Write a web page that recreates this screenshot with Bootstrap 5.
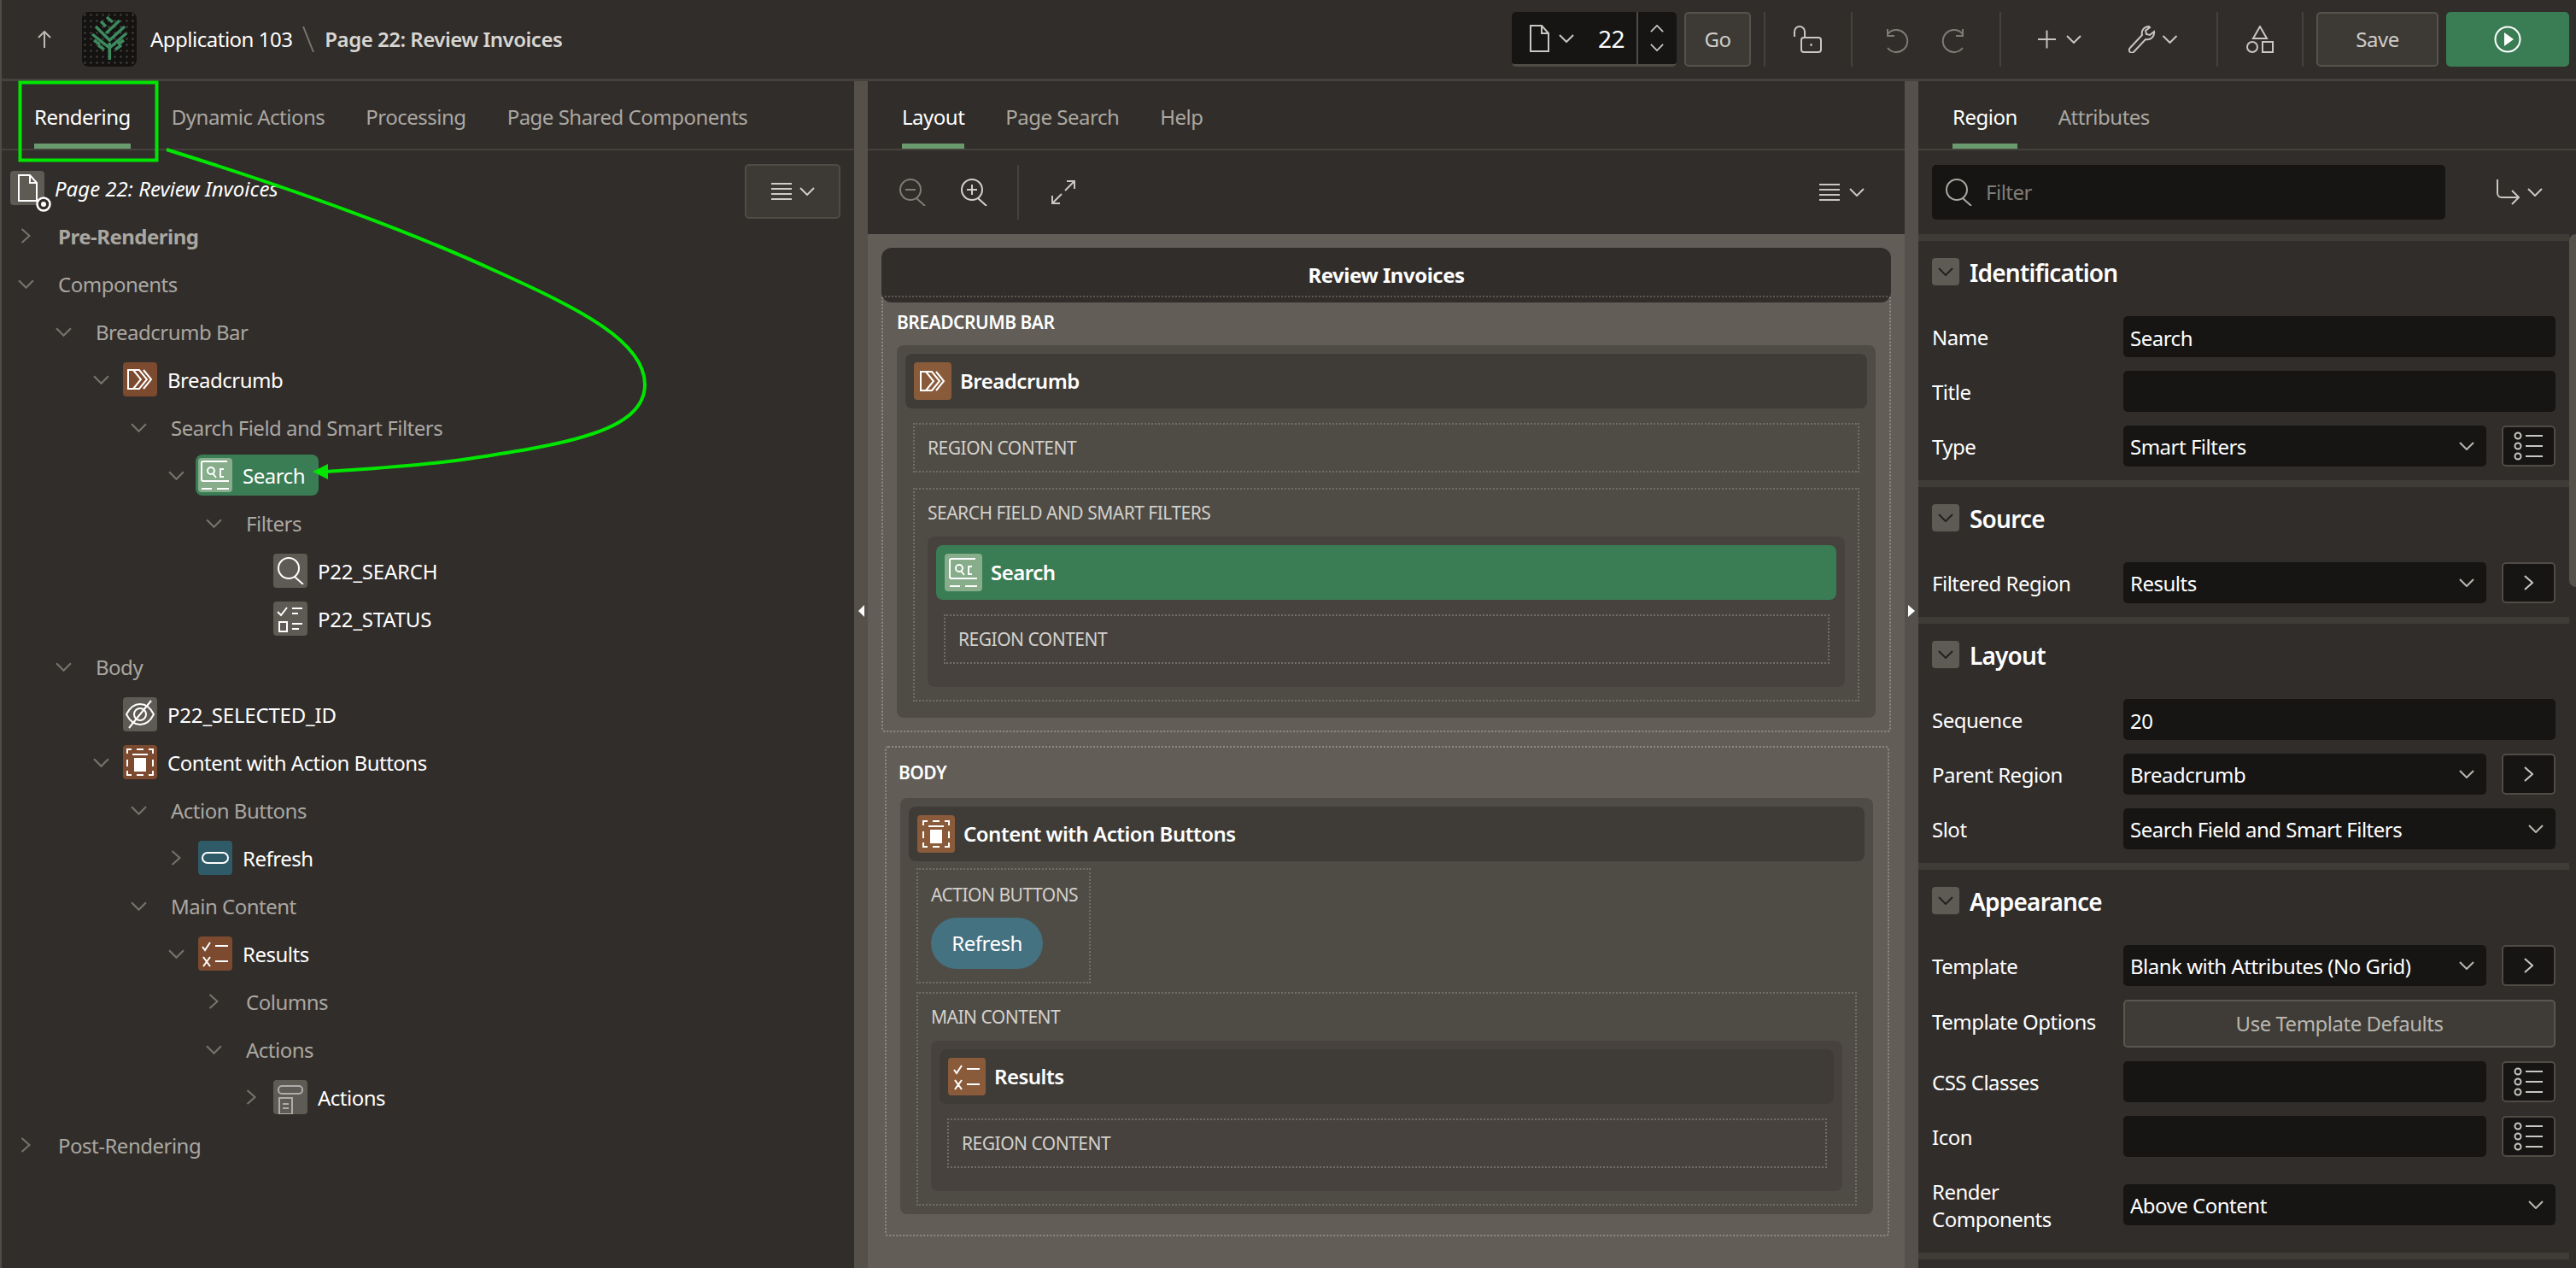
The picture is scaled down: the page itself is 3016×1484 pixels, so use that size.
<!DOCTYPE html>
<html lang="en">
<head>
  <meta charset="UTF-8">
  <title>Page 22: Review Invoices</title>
  <link href="https://cdn.jsdelivr.net/npm/bootstrap@5.3.0/dist/css/bootstrap.min.css" rel="stylesheet">
  <style>
    html, body { height: 100%; }
    body { margin: 0; background: #312d2a; color: #fff; font-family: "Noto Sans", "Liberation Sans", sans-serif; font-size: 24px; line-height: 32px; overflow: hidden; position: relative; letter-spacing: -.5px; }
    svg { display: block; flex: none; }
    .ln { fill: none; stroke: currentColor; stroke-width: 2; stroke-linecap: butt; stroke-linejoin: miter; }
    .shell { height: 1484px; width: 3016px; border-left: 2px solid #4f4b45; }

    /* top bar */
    .topbar { height: 95px; border-bottom: 3px solid #45413c; padding-right: 8px; }
    .upbtn { margin-left: 40px; color: #bdbab5; }
    .logo { width: 64px; height: 64px; margin-left: 34px; border-radius: 8px; background-color: #141312; background-image: radial-gradient(#3b3a37 1px, transparent 1.5px); background-size: 7px 7px; }
    .appname { margin-left: 16px; }
    .crumbsep { margin: 0 12px; color: #77736d; }
    .pagename { font-weight: 600; color: #d8d6d2; }
    .pagepick { width: 193px; height: 64px; background: #161513; border-bottom: 3px solid #4f4b45; border-radius: 5px; }
    .pagepick .pp-doc { margin-left: 20px; color: #c9c7c3; }
    .pagepick .pp-chev { margin-left: 11px; color: #c9c7c3; }
    .pagepick .pp-num { margin-left: 28px; width: 45px; font-size: 28px; }
    .pp-steps { border-left: 2px solid #4f4b45; height: 100%; width: 48px; color: #c9c7c3; }
    .tbtn { height: 64px; background: #3d3935; border: 2px solid #55514b; border-radius: 5px; color: #cfcdc9; }
    .tbtn-go { width: 78px; margin-left: 9px; }
    .tbtn-save { width: 143px; margin-left: 15px; }
    .tbtn-run { width: 144px; height: 64px; margin-left: 9px; background: #3a7d55; border-radius: 5px; color: #fff; }
    .tdiv { width: 2px; height: 64px; background: #45413c; }
    .d1 { margin-left: 15px; }
    .ic-lock { margin: 0 34px 0 33px; color: #c9c7c3; }
    .ic-undo { margin: 0 38px 0 34px; color: #7f7c77; }
    .ic-redo { margin-right: 36px; color: #7f7c77; }
    .ic-plus { margin-left: 43px; color: #c9c7c3; }
    .ic-wrench { margin-left: 55px; color: #c9c7c3; }
    .ic-shapes { margin: 0 33px 0 33px; color: #c9c7c3; }
    .ic-gap1 { margin-left: 12px; color: #c9c7c3; }
    .ic-gap2 { margin: 0 45px 0 7px; color: #c9c7c3; }

    /* panes */
    .pane-left { width: 998px; }
    .gutter { width: 16px; background: #55514a; position: relative; }
    .gutter-mark { position: absolute; top: 613px; left: 5px; width: 0; height: 0; border-top: 7px solid transparent; border-bottom: 7px solid transparent; }
    .gutter-mark.to-left { border-right: 7px solid #fff; }
    .gutter-mark.to-right { border-left: 8px solid #fff; left: 4px; }
    .pane-mid { width: 1214px; }
    .pane-right { width: 770px; }
    .tabsrow { height: 81px; border-bottom: 2px solid #45413c; padding-left: 38px; gap: 48px; }
    .pane-mid .tabsrow, .pane-right .tabsrow { padding-left: 40px; }
    .tablink { padding-top: 26px; color: #aaa7a1; line-height: 32px; border-bottom: 6px solid transparent; height: 79px; }
    .tablink.on { color: #fff; border-bottom-color: #6a9a6e; }

    /* left tree */
    .treewrap { padding-top: 16px; position: relative; }
    .treemenu { position: absolute; top: 16px; right: 16px; width: 112px; height: 64px; background: #3d3935; border: 2px solid #4f4b45; border-radius: 5px; color: #cfcdc9; gap: 9px; }
    .trow { height: 56px; display: flex; align-items: center; color: #aaa7a1; }
    .l0 { padding-left: 19px; } .l1 { padding-left: 63px; } .l2 { padding-left: 107px; } .l3 { padding-left: 151px; }
    .l4 { padding-left: 195px; } .l5 { padding-left: 239px; } .l6 { padding-left: 283px; }
    .tw { width: 35px; flex: none; color: #77736d; }
    .tw-r { padding-left: 3px; }
    .tlabel { margin-left: 12px; padding-top: 2px; }
    .tname { margin-left: 12px; color: #fff; padding-top: 2px; }
    .tname-item { letter-spacing: -.2px; }
    .tstrong { font-weight: 700; color: #aaa7a1; }
    .tic { width: 40px; height: 40px; border-radius: 4px; color: #fff; flex: none; }
    .bg-grey { background: #5e5a54; }
    .bg-brown { background: #7c4a2e; }
    .bg-teal { background: #2f5b68; }
    .bg-pale { background: #87ad8b; }
    .selnode { background: #3a7d55; border-radius: 8px; height: 48px; padding: 4px 16px 4px 3px; display: flex; align-items: center; margin-left: -3px; }
    .pagerow { padding-left: 10px; height: 56px; display: flex; align-items: center; position: relative; }
    .pagerow .tname { font-style: italic; margin-left: 12px; letter-spacing: 0; }
    .pagebadge { position: absolute; left: 40px; top: 38px; }

    /* centre canvas */
    .midbar { height: 98px; padding: 0 47px 0 36px; color: #c9c7c3; }
    .ic-zo { color: #7f7c77; margin-right: 40px; }
    .ic-zi { color: #d2d0cc; }
    .mdiv { width: 2px; height: 64px; background: #45413c; margin: 0 38px 0 35px; }
    .menu-mid { gap: 11px; }
    .canvas { background: #625d57; padding: 16px 16px 0; height: 1210px; overflow: hidden; }
    .pagetitle { height: 64px; background: #312d2a; border-radius: 12px; font-weight: 700; }
    .dot { border: 2px dotted #8e8a84; border-radius: 4px; }
    .dot2 { border: 2px dotted #716d67; }
    .capt { font-size: 21px; line-height: 30px; text-transform: uppercase; color: #d3d1cc; white-space: nowrap; }
    .capt-main { color: #fff; font-weight: 600; }
    .zone-a { margin-top: -8px; height: 511px; padding: 14px 16px 0 16px; border-top-color: #5c5852; position: relative; }
    .zone-b { margin: 16px 2px 0 4px; height: 574px; padding: 14px 17px 0 16px; }
    .zone-b .capt-main { margin-left: -2px; }
    .block { background: #4f4b45; border-radius: 8px; padding: 10px; margin-top: 12px; }
    .zone-b .block { margin-top: 15px; }
    .rhead { height: 64px; border-radius: 8px; background: #3f3c37; padding-left: 10px; font-weight: 600; padding-top: 0; }
    .rhead.sel { background: #3a7d55; }
    .rhead .tic { width: 44px; height: 44px; margin-right: 10px; }
    .rhead .bg-brown { background: #8a5b3a; }
    .box { height: 58px; padding: 10px 15px; margin: 17px 9px 0; }
    .box-inner { margin: 17px 8px 0 9px; }
    .subzone { height: 250px; margin: 18px 9px 9px; padding: 12px 15px 0; }
    .darkblock { background: #47423d; border-radius: 8px; padding: 10px; margin: 13px 0 0 0; height: 176px; }
    .btnzone { width: 204px; height: 135px; margin: 8px 0 0 9px; padding: 14px 15px 0; }
    .pillbtn { width: 131px; height: 60px; margin-top: 12px; border-radius: 30px; background: #447281; color: #fff; }
    .mainzone { height: 250px; margin: 10px 9px 0; padding: 12px 15px 0; }

    /* property editor */
    .rightbar { height: 98px; padding: 0 31px 0 16px; }
    .filterbox { width: 601px; height: 64px; background: #161513; border-radius: 5px; padding-left: 15px; color: #aaa7a1; }
    .filterbox input { background: transparent; border: 0; color: #fff; margin-left: 16px; padding: 0; font-size: 24px; box-shadow: none; letter-spacing: -.5px; }
    .filterbox input::placeholder { color: #807c76; opacity: 1; }
    .ret-ic { margin-left: 59px; color: #c9c7c3; }
    .ret-chev { margin-left: 9px; color: #c9c7c3; }
    .propscroll { height: 1210px; overflow: hidden; }
    .propcol { width: 762px; }
    .scrolltrack { width: 8px; }
    .scrollthumb { height: 413px; background: #55514b; border-radius: 8px 0 0 8px; }
    .sect { border-top: 8px solid #3f3c37; padding: 20px 16px 16px; }
    .shead { margin-bottom: 36px; height: 32px; }
    .sicon { width: 32px; height: 32px; background: #5e5a54; border-radius: 4px; color: #23211f; margin-right: 12px; }
    .stitle { font-size: 28px; font-weight: 600; letter-spacing: -.8px; padding-top: 2px; }
    .prow { min-height: 48px; margin-top: 16px; }
    .plabel { width: 224px; flex: none; line-height: 32px; padding-top: 2px; }
    .plabel-up { margin-top: -6px; }
    .inp { height: 48px; background: #161513; border: 0; border-radius: 5px; color: #fff; font-size: 24px; padding: 2px 8px 0; letter-spacing: -.5px; box-shadow: none; }
    .inp:focus { background: #161513; color: #fff; }
    select.inp { padding-right: 40px; background-position: right 14px center; background-size: 18px 10px; background-repeat: no-repeat; appearance: none; background-image: url("data:image/svg+xml,%3Csvg xmlns='http://www.w3.org/2000/svg' viewBox='0 0 18 10'%3E%3Cpolyline points='1,1 9,9 17,1' fill='none' stroke='%23b9b6b0' stroke-width='2'/%3E%3C/svg%3E"); }
    .withbtn { width: 425px; flex: none; }
    .fullw { width: 506px; flex: none; }
    .iconbtn { width: 63px; height: 48px; margin-left: 18px; background: #161513; border: 2px solid #4f4b45; border-radius: 5px; color: #c9c7c3; }
    .defbtn { width: 506px; height: 56px; background: #3f3c37; border: 2px solid #5a564f; border-radius: 5px; color: #b9b6b0; }
    .rowtall { min-height: 80px; }
    .overlay { position: absolute; left: 0; top: 0; pointer-events: none; }
  </style>
</head>
<body>
  <svg width="0" height="0" class="position-absolute">
    <symbol id="cd" viewBox="0 0 18 10"><polyline class="ln" points="1,1 9,9 17,1"/></symbol>
    <symbol id="cr" viewBox="0 0 11 18"><polyline class="ln" points="1,1 10,9 1,17"/></symbol>
    <symbol id="cu" viewBox="0 0 18 10"><polyline class="ln" points="1,9 9,1 17,9"/></symbol>
    <symbol id="doc" viewBox="0 0 24 32"><path class="ln" d="M2 1h13l8 9v21H2zM15 1v9h8"/></symbol>
    <symbol id="menu" viewBox="0 0 24 20"><path class="ln" d="M0 1h24M0 7h24M0 13h24M0 19h24"/></symbol>
    <symbol id="mag" viewBox="0 0 32 32"><circle class="ln" cx="14" cy="13" r="12"/><path class="ln" d="M21 23l10 9"/></symbol>
    <symbol id="magm" viewBox="0 0 32 32"><circle class="ln" cx="14" cy="13" r="12"/><path class="ln" d="M21 23l10 9M8 13h12"/></symbol>
    <symbol id="magp" viewBox="0 0 32 32"><circle class="ln" cx="14" cy="13" r="12"/><path class="ln" d="M21 23l10 9M8 13h12M14 7v12"/></symbol>
    <symbol id="exp" viewBox="0 0 28 28"><path class="ln" d="M16 12L27 1M18 1h9v9M12 16L1 27M1 18v9h9"/></symbol>
    <symbol id="lst" viewBox="0 0 36 36"><circle class="ln" cx="5" cy="6" r="3.500"/><circle class="ln" cx="5" cy="18" r="3.500"/><circle class="ln" cx="5" cy="30" r="3.500"/><path class="ln" d="M14 6h20M14 18h20M14 30h20"/></symbol>
    <symbol id="crumb" viewBox="0 0 40 40"><path class="ln" d="M6 9h13l9 11-9 11H6zM12 9l9 11-9 11M24 9l9 11-9 11"/></symbol>
    <symbol id="srch" viewBox="0 0 40 40"><path class="ln" d="M6 4h28M6 4a2 2 0 0 0-2 2v19a2 2 0 0 0 2 2h30M4 36h12M22 36h14M30 13h-4v9h4"/><circle class="ln" cx="15" cy="15" r="4"/><path class="ln" d="M17 18l4 5"/></symbol>
    <symbol id="chk" viewBox="0 0 40 40"><path class="ln" d="M5 12l4 4 7-9M22 8h12M22 14h7M7 24h9v11H7zM22 26h12M22 32h8"/></symbol>
    <symbol id="eye" viewBox="0 0 40 40"><path class="ln" d="M4 20c4-8 10-12 16-12s12 4 16 12c-4 8-10 12-16 12S8 28 4 20z"/><circle class="ln" cx="20" cy="20" r="7"/><path class="ln" d="M33 4L7 36"/></symbol>
    <symbol id="cont" viewBox="0 0 40 40"><path class="ln" d="M5 10V5h5M16 5h8M30 5h5v5M5 17v8M35 17v8M5 30v5h5M16 35h8M30 35h5v-5"/><path class="ln" d="M11 11h18"/><rect x="13" y="15" width="14" height="16" fill="currentColor"/></symbol>
    <symbol id="pill" viewBox="0 0 40 40"><rect class="ln" x="5" y="14" width="30" height="12" rx="6"/></symbol>
    <symbol id="res" viewBox="0 0 40 40"><path class="ln" d="M5 12l3 4 6-9M20 11h15M20 29h15M6 24l8 11M14 24L6 35"/></symbol>
    <symbol id="act" viewBox="0 0 40 40"><rect class="ln" x="6" y="7" width="28" height="9" rx="4"/><path class="ln" d="M7 21h15v19H7zM11 28h7M11 33h7"/></symbol>
    <symbol id="undo" viewBox="0 0 32 32"><path class="ln" d="M7 4v8h8M7 10a13 13 0 1 1 0 16"/></symbol>
    <symbol id="redo" viewBox="0 0 32 32"><path class="ln" d="M25 4v8h-8M25 10a13 13 0 1 0 0 16"/></symbol>
    <symbol id="lock" viewBox="0 0 33 32"><path class="ln" d="M1 13V7a6 6 0 0 1 12 0v7"/><rect class="ln" x="9" y="14" width="23" height="17" rx="3"/><path class="ln" d="M20.500 21v3"/></symbol>
    <symbol id="plus" viewBox="0 0 22 22"><path class="ln" d="M11 0v22M0 11h22"/></symbol>
    <symbol id="wrench" viewBox="0 0 32 32"><path class="ln" d="M24 1a8 8 0 0 0-8 10L2 26a3 3 0 0 0 4 5l14-15a8 8 0 0 0 10-9l-5 4-4-1-1-4 5-4a8 8 0 0 0-1-1z"/></symbol>
    <symbol id="shapes" viewBox="0 0 32 32"><path class="ln" d="M16 1l8 14H8zM19 19h12v12H19z"/><circle class="ln" cx="7" cy="25" r="6"/></symbol>
    <symbol id="ret" viewBox="0 0 28 30"><path class="ln" d="M2 0v16a5 5 0 0 0 5 5h19M19 13l8 8-8 8"/></symbol>
    <symbol id="run" viewBox="0 0 32 32"><circle class="ln" cx="16" cy="16" r="14.500"/><path d="M12 8l11 8-11 8z" fill="currentColor"/></symbol>
  </svg>

  <div class="shell d-flex flex-column">
    <header class="topbar d-flex align-items-center">
      <svg class="upbtn" width="20" height="20" viewBox="0 0 20 20"><path class="ln" d="M10 20V1M3 8l7-7 7 7"/></svg>
      <div class="logo d-flex align-items-center justify-content-center">
        <svg width="64" height="64" viewBox="0 0 64 64"><path d="M32.300 56V36M12 26l20.300 16L52 25M16 17l16.300 16L50 17M22 11l6 6M28 25L44 10M29 6l7 6M14 33l7 5M19 39l7 5M49 33l-7 5M46 39l-7 5" fill="none" stroke="#3d8a5f" stroke-width="3.500"/></svg>
      </div>
      <span class="appname">Application 103</span>
      <svg class="crumbsep" width="14" height="30" viewBox="0 0 14 30"><path d="M1 0l12 30" stroke="currentColor" stroke-width="2"/></svg>
      <span class="pagename">Page 22: Review Invoices</span>

      <div class="pagepick d-flex align-items-center ms-auto">
        <svg class="pp-doc" width="24" height="32"><use href="#doc"/></svg>
        <svg class="pp-chev" width="18" height="10"><use href="#cd"/></svg>
        <span class="pp-num">22</span>
        <div class="pp-steps d-flex flex-column align-items-center justify-content-around ms-auto py-2">
          <svg width="16" height="9"><use href="#cu"/></svg>
          <svg width="16" height="9"><use href="#cd"/></svg>
        </div>
      </div>
      <div class="tbtn tbtn-go d-flex align-items-center justify-content-center">Go</div>
      <div class="tdiv d1"></div>
      <svg class="ic-lock" width="33" height="32"><use href="#lock"/></svg>
      <div class="tdiv"></div>
      <svg class="ic-undo" width="32" height="32"><use href="#undo"/></svg>
      <svg class="ic-redo" width="32" height="32"><use href="#redo"/></svg>
      <div class="tdiv"></div>
      <svg class="ic-plus" width="21" height="22"><use href="#plus"/></svg>
      <svg class="ic-gap1" width="18" height="10"><use href="#cd"/></svg>
      <svg class="ic-wrench" width="32" height="32"><use href="#wrench"/></svg>
      <svg class="ic-gap2" width="19" height="10"><use href="#cd"/></svg>
      <div class="tdiv"></div>
      <svg class="ic-shapes" width="32" height="32"><use href="#shapes"/></svg>
      <div class="tdiv"></div>
      <div class="tbtn tbtn-save d-flex align-items-center justify-content-center">Save</div>
      <div class="tbtn-run d-flex align-items-center justify-content-center"><svg width="32" height="32"><use href="#run"/></svg></div>
    </header>

    <div class="d-flex flex-grow-1">
      <!-- left: rendering tree -->
      <section class="pane-left">
        <nav class="tabsrow d-flex">
          <span class="tablink on">Rendering</span>
          <span class="tablink">Dynamic Actions</span>
          <span class="tablink">Processing</span>
          <span class="tablink">Page Shared Components</span>
        </nav>
        <div class="treewrap">
          <div class="treemenu d-flex align-items-center justify-content-center">
            <svg width="24" height="20"><use href="#menu"/></svg>
            <svg width="18" height="10"><use href="#cd"/></svg>
          </div>
          <div class="pagerow">
            <div class="tic bg-grey d-flex align-items-center justify-content-center"><svg width="24" height="32"><use href="#doc"/></svg></div>
            <svg class="pagebadge" width="18" height="18" viewBox="0 0 18 18"><circle cx="9" cy="9" r="7.500" fill="#312d2a" stroke="#fff" stroke-width="2.500"/><circle cx="9" cy="9" r="3" fill="#fff"/></svg>
            <span class="tname">Page 22: Review Invoices</span>
          </div>
          <div class="trow l0"><span class="tw tw-r"><svg width="12" height="18"><use href="#cr"/></svg></span><span class="tlabel tstrong">Pre-Rendering</span></div>
          <div class="trow l0"><span class="tw"><svg width="19" height="11"><use href="#cd"/></svg></span><span class="tlabel">Components</span></div>
          <div class="trow l1"><span class="tw"><svg width="19" height="11"><use href="#cd"/></svg></span><span class="tlabel">Breadcrumb Bar</span></div>
          <div class="trow l2"><span class="tw"><svg width="19" height="11"><use href="#cd"/></svg></span><div class="tic bg-brown"><svg width="40" height="40"><use href="#crumb"/></svg></div><span class="tname">Breadcrumb</span></div>
          <div class="trow l3"><span class="tw"><svg width="19" height="11"><use href="#cd"/></svg></span><span class="tlabel">Search Field and Smart Filters</span></div>
          <div class="trow l4"><span class="tw"><svg width="19" height="11"><use href="#cd"/></svg></span>
            <div class="selnode"><div class="tic bg-pale"><svg width="40" height="40"><use href="#srch"/></svg></div><span class="tname">Search</span></div>
          </div>
          <div class="trow l5"><span class="tw"><svg width="19" height="11"><use href="#cd"/></svg></span><span class="tlabel">Filters</span></div>
          <div class="trow l6"><span class="tw"></span><div class="tic bg-grey d-flex align-items-center justify-content-center"><svg width="32" height="32"><use href="#mag"/></svg></div><span class="tname tname-item">P22_SEARCH</span></div>
          <div class="trow l6"><span class="tw"></span><div class="tic bg-grey"><svg width="40" height="40"><use href="#chk"/></svg></div><span class="tname tname-item">P22_STATUS</span></div>
          <div class="trow l1"><span class="tw"><svg width="19" height="11"><use href="#cd"/></svg></span><span class="tlabel">Body</span></div>
          <div class="trow l2"><span class="tw"></span><div class="tic bg-grey"><svg width="40" height="40"><use href="#eye"/></svg></div><span class="tname tname-item">P22_SELECTED_ID</span></div>
          <div class="trow l2"><span class="tw"><svg width="19" height="11"><use href="#cd"/></svg></span><div class="tic bg-brown"><svg width="40" height="40"><use href="#cont"/></svg></div><span class="tname">Content with Action Buttons</span></div>
          <div class="trow l3"><span class="tw"><svg width="19" height="11"><use href="#cd"/></svg></span><span class="tlabel">Action Buttons</span></div>
          <div class="trow l4"><span class="tw tw-r"><svg width="12" height="18"><use href="#cr"/></svg></span><div class="tic bg-teal"><svg width="40" height="40"><use href="#pill"/></svg></div><span class="tname">Refresh</span></div>
          <div class="trow l3"><span class="tw"><svg width="19" height="11"><use href="#cd"/></svg></span><span class="tlabel">Main Content</span></div>
          <div class="trow l4"><span class="tw"><svg width="19" height="11"><use href="#cd"/></svg></span><div class="tic bg-brown"><svg width="40" height="40"><use href="#res"/></svg></div><span class="tname">Results</span></div>
          <div class="trow l5"><span class="tw tw-r"><svg width="12" height="18"><use href="#cr"/></svg></span><span class="tlabel">Columns</span></div>
          <div class="trow l5"><span class="tw"><svg width="19" height="11"><use href="#cd"/></svg></span><span class="tlabel">Actions</span></div>
          <div class="trow l6"><span class="tw tw-r"><svg width="12" height="18"><use href="#cr"/></svg></span><div class="tic bg-grey text-white-50"><svg width="40" height="40"><use href="#act"/></svg></div><span class="tname">Actions</span></div>
          <div class="trow l0"><span class="tw tw-r"><svg width="12" height="18"><use href="#cr"/></svg></span><span class="tlabel">Post-Rendering</span></div>
        </div>
      </section>

      <div class="gutter"><span class="gutter-mark to-left"></span></div>

      <!-- centre: layout -->
      <section class="pane-mid">
        <nav class="tabsrow d-flex">
          <span class="tablink on">Layout</span>
          <span class="tablink">Page Search</span>
          <span class="tablink">Help</span>
        </nav>
        <div class="midbar d-flex align-items-center">
          <svg class="ic-zo" width="32" height="32"><use href="#magm"/></svg>
          <svg class="ic-zi" width="32" height="32"><use href="#magp"/></svg>
          <div class="mdiv"></div>
          <svg width="28" height="28"><use href="#exp"/></svg>
          <div class="menu-mid d-flex align-items-center ms-auto">
            <svg width="24" height="20"><use href="#menu"/></svg>
            <svg width="18" height="10"><use href="#cd"/></svg>
          </div>
        </div>
        <div class="canvas">
          <div class="pagetitle d-flex align-items-center justify-content-center">Review Invoices</div>

          <div class="zone-a dot">
            <div class="capt capt-main">Breadcrumb Bar</div>
            <div class="block">
              <div class="rhead d-flex align-items-center"><div class="tic bg-brown d-flex align-items-center justify-content-center"><svg width="40" height="40"><use href="#crumb"/></svg></div>Breadcrumb</div>
              <div class="box dot2 capt d-flex align-items-center">Region Content</div>
              <div class="subzone dot2">
                <div class="capt">Search Field and Smart Filters</div>
                <div class="darkblock">
                  <div class="rhead sel d-flex align-items-center"><div class="tic bg-pale d-flex align-items-center justify-content-center"><svg width="40" height="40"><use href="#srch"/></svg></div>Search</div>
                  <div class="box box-inner dot2 capt d-flex align-items-center">Region Content</div>
                </div>
              </div>
            </div>
          </div>

          <div class="zone-b dot">
            <div class="capt capt-main">Body</div>
            <div class="block">
              <div class="rhead d-flex align-items-center"><div class="tic bg-brown d-flex align-items-center justify-content-center"><svg width="40" height="40"><use href="#cont"/></svg></div>Content with Action Buttons</div>
              <div class="btnzone dot2">
                <div class="capt">Action Buttons</div>
                <div class="pillbtn d-flex align-items-center justify-content-center">Refresh</div>
              </div>
              <div class="mainzone dot2">
                <div class="capt">Main Content</div>
                <div class="darkblock">
                  <div class="rhead d-flex align-items-center"><div class="tic bg-brown d-flex align-items-center justify-content-center"><svg width="40" height="40"><use href="#res"/></svg></div>Results</div>
                  <div class="box box-inner dot2 capt d-flex align-items-center">Region Content</div>
                </div>
              </div>
            </div>
          </div>
        </div>
      </section>

      <div class="gutter"><span class="gutter-mark to-right"></span></div>

      <!-- right: property editor -->
      <section class="pane-right">
        <nav class="tabsrow d-flex">
          <span class="tablink on">Region</span>
          <span class="tablink">Attributes</span>
        </nav>
        <div class="rightbar d-flex align-items-center">
          <div class="filterbox d-flex align-items-center">
            <svg width="32" height="32"><use href="#mag"/></svg>
            <input class="form-control" type="text" placeholder="Filter">
          </div>
          <svg class="ret-ic" width="28" height="30"><use href="#ret"/></svg>
          <svg class="ret-chev" width="18" height="10"><use href="#cd"/></svg>
        </div>
        <div class="propscroll d-flex">
          <div class="propcol">
            <div class="sect">
              <div class="shead d-flex align-items-center"><div class="sicon d-flex align-items-center justify-content-center"><svg width="18" height="10"><use href="#cd"/></svg></div><span class="stitle">Identification</span></div>
              <div class="prow d-flex align-items-center"><span class="plabel">Name</span><input class="form-control inp fullw" type="text" value="Search"></div>
              <div class="prow d-flex align-items-center"><span class="plabel">Title</span><input class="form-control inp fullw" type="text"></div>
              <div class="prow d-flex align-items-center"><span class="plabel">Type</span><select class="form-select inp withbtn"><option>Smart Filters</option></select><div class="iconbtn d-flex align-items-center justify-content-center"><svg width="36" height="36"><use href="#lst"/></svg></div></div>
            </div>
            <div class="sect">
              <div class="shead d-flex align-items-center"><div class="sicon d-flex align-items-center justify-content-center"><svg width="18" height="10"><use href="#cd"/></svg></div><span class="stitle">Source</span></div>
              <div class="prow d-flex align-items-center"><span class="plabel">Filtered Region</span><select class="form-select inp withbtn"><option>Results</option></select><div class="iconbtn d-flex align-items-center justify-content-center"><svg width="11" height="18"><use href="#cr"/></svg></div></div>
            </div>
            <div class="sect">
              <div class="shead d-flex align-items-center"><div class="sicon d-flex align-items-center justify-content-center"><svg width="18" height="10"><use href="#cd"/></svg></div><span class="stitle">Layout</span></div>
              <div class="prow d-flex align-items-center"><span class="plabel">Sequence</span><input class="form-control inp fullw" type="text" value="20"></div>
              <div class="prow d-flex align-items-center"><span class="plabel">Parent Region</span><select class="form-select inp withbtn"><option>Breadcrumb</option></select><div class="iconbtn d-flex align-items-center justify-content-center"><svg width="11" height="18"><use href="#cr"/></svg></div></div>
              <div class="prow d-flex align-items-center"><span class="plabel">Slot</span><select class="form-select inp fullw"><option>Search Field and Smart Filters</option></select></div>
            </div>
            <div class="sect">
              <div class="shead d-flex align-items-center"><div class="sicon d-flex align-items-center justify-content-center"><svg width="18" height="10"><use href="#cd"/></svg></div><span class="stitle">Appearance</span></div>
              <div class="prow d-flex align-items-center"><span class="plabel">Template</span><select class="form-select inp withbtn"><option>Blank with Attributes (No Grid)</option></select><div class="iconbtn d-flex align-items-center justify-content-center"><svg width="11" height="18"><use href="#cr"/></svg></div></div>
              <div class="prow d-flex align-items-center"><span class="plabel plabel-up">Template Options</span><div class="defbtn d-flex align-items-center justify-content-center">Use Template Defaults</div></div>
              <div class="prow d-flex align-items-center"><span class="plabel">CSS Classes</span><input class="form-control inp withbtn" type="text"><div class="iconbtn d-flex align-items-center justify-content-center"><svg width="36" height="36"><use href="#lst"/></svg></div></div>
              <div class="prow d-flex align-items-center"><span class="plabel">Icon</span><input class="form-control inp withbtn" type="text"><div class="iconbtn d-flex align-items-center justify-content-center"><svg width="36" height="36"><use href="#lst"/></svg></div></div>
              <div class="prow rowtall d-flex align-items-center"><span class="plabel">Render<br>Components</span><select class="form-select inp fullw"><option>Above Content</option></select></div>
            </div>
            <div class="sect"></div>
          </div>
          <div class="scrolltrack"><div class="scrollthumb"></div></div>
        </div>
      </section>
    </div>
  </div>

  <!-- annotation drawn over the page -->
  <svg class="overlay" width="3016" height="1484" viewBox="0 0 3016 1484">
    <rect x="23.500" y="96.500" width="160" height="91" fill="none" stroke="#00e600" stroke-width="4"/>
    <path d="M195 175C320 214 460 262 580 317C680 362 755 400 755 450C755 505 660 520 548 537C495 545 440 548 383 552" fill="none" stroke="#00e600" stroke-width="4"/>
    <polygon points="366,552 384,543 384,561" fill="#00e600"/>
  </svg>
</body>
</html>
